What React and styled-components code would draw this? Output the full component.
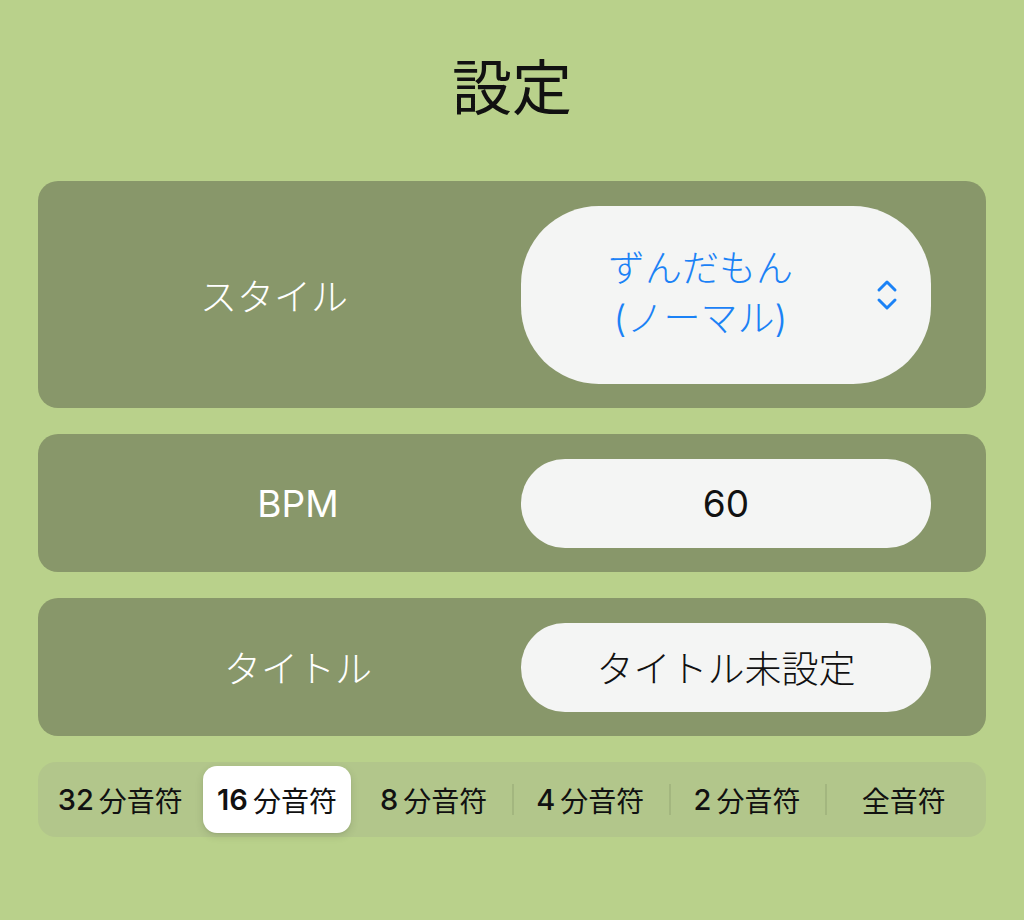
import React from "react";
import styled, { createGlobalStyle } from "styled-components";

const Global = createGlobalStyle`
  html, body { margin: 0; padding: 0; background: #b9d18b; }
  body { font-family: Inter, "Noto Sans CJK JP", sans-serif; }
`;

const Page = styled.div`
  width: 1024px;
  height: 920px;
  box-sizing: border-box;
  padding: 48px 38px 0;
  background: #b9d18b;
  display: flex;
  flex-direction: column;
`;

const Title = styled.h1`
  margin: 0 0 61px;
  font-family: "Noto Sans CJK JP", sans-serif;
  font-weight: 400;
  font-size: 60px;
  line-height: 72px;
  text-align: center;
  color: #111;
`;

const Stack = styled.div`
  display: flex;
  flex-direction: column;
  gap: 26px;
`;

const Card = styled.div`
  background: #88976a;
  border-radius: 20px;
  padding: 24.5px 55px 24.5px 37px;
  display: grid;
  grid-template-columns: 1fr 410px;
  align-items: center;
`;

const Label = styled.div`
  font-family: Inter, "Noto Sans CJK JP", sans-serif;
  font-weight: ${(p) => (p.$latin ? 400 : 300)};
  font-size: 37px;
  color: #ffffff;
  text-align: center;
  padding-right: ${(p) => p.$inset || 0}px;
`;

const Pill = styled.div`
  background: #f4f5f4;
  border-radius: ${(p) => (p.$tall ? 78 : 44)}px;
  height: ${(p) => (p.$tall ? 178 : 89)}px;
  display: flex;
  align-items: center;
  justify-content: center;
  font-family: Inter, "Noto Sans CJK JP", sans-serif;
  font-weight: ${(p) => (p.$latin ? 400 : 300)};
  font-size: 37px;
  color: #111;
`;

const PickerPill = styled(Pill)`
  justify-content: flex-start;
  padding: 0 33px 0 20px;
  color: #1b82f6;
`;

const PickerText = styled.div`
  flex: 1;
  text-align: center;
  line-height: 50px;
  margin-right: 16px;
  margin-top: -2px;
`;

const Chevron = styled.svg`
  width: 22px;
  height: 32px;
  flex: none;
`;

const Segmented = styled.div`
  background: #b2c68b;
  border-radius: 18px;
  height: 75px;
  padding: 4px;
  box-sizing: border-box;
  display: grid;
  grid-template-columns: repeat(6, 1fr);
  align-items: center;
`;

const Segment = styled.div`
  position: relative;
  height: 100%;
  display: flex;
  align-items: center;
  justify-content: center;
  font-family: "Noto Sans CJK JP", sans-serif;
  font-size: 28px;
  color: #111;
  border-radius: 14px;
  margin: 0 4px;
  background: ${(p) => (p.$active ? "#ffffff" : "transparent")};
  box-shadow: ${(p) => (p.$active ? "0 3px 8px rgba(0,0,0,0.12), 0 1px 2px rgba(0,0,0,0.06)" : "none")};

  &::before {
    content: "";
    display: ${(p) => (p.$divider ? "block" : "none")};
    position: absolute;
    left: -4px;
    top: 18px;
    bottom: 18px;
    width: 2px;
    background: #a3b67f;
  }
`;

const Num = styled.span`
  font-family: Inter, sans-serif;
  font-size: 29px;
  font-weight: ${(p) => (p.$active ? 600 : 500)};
  margin-right: 5px;
`;

const segments = [
  { n: "32", t: "分音符" },
  { n: "16", t: "分音符" },
  { n: "8", t: "分音符" },
  { n: "4", t: "分音符" },
  { n: "2", t: "分音符" },
  { n: "", t: "全音符" },
];
const activeIndex = 1;

export default function App() {
  return (
    <>
      <Global />
      <Page>
        <Title>設定</Title>
        <Stack>
          <Card>
            <Label $inset={48}>スタイル</Label>
            <PickerPill $tall>
              <PickerText>
                ずんだもん
                <br />
                (ノーマル)
              </PickerText>
              <Chevron viewBox="0 0 22 32" fill="none" stroke="#1b82f6" strokeWidth="3" strokeLinecap="round" strokeLinejoin="round">
                <path d="M3 11 L11 3 L19 11" />
                <path d="M3 21 L11 29 L19 21" />
              </Chevron>
            </PickerPill>
          </Card>
          <Card>
            <Label $latin>BPM</Label>
            <Pill $latin>60</Pill>
          </Card>
          <Card>
            <Label>タイトル</Label>
            <Pill>タイトル未設定</Pill>
          </Card>
          <Segmented>
            {segments.map((s, i) => (
              <Segment
                key={i}
                $active={i === activeIndex}
                $divider={i > 0 && i !== activeIndex && i - 1 !== activeIndex}
              >
                {s.n && <Num $active={i === activeIndex}>{s.n}</Num>}
                {s.t}
              </Segment>
            ))}
          </Segmented>
        </Stack>
      </Page>
    </>
  );
}
